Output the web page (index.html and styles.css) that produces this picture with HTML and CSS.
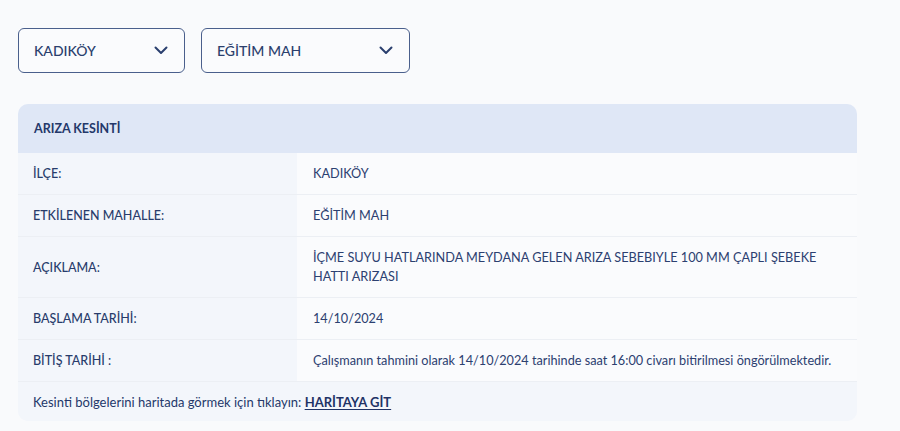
FILE: index.html
```html
<!DOCTYPE html>
<html lang="tr">
<head>
<meta charset="utf-8">
<link rel="stylesheet" href="styles.css">
</head>
<body>
<div class="page">
  <div class="filters">
    <div class="select select-district">
      <span>KADIKÖY</span>
      <svg class="chev" width="14" height="9" viewBox="0 0 14 9"><path d="M1.5 1.5 L7 7 L12.5 1.5" fill="none" stroke="#2a3f6e" stroke-width="2" stroke-linecap="round" stroke-linejoin="round"/></svg>
    </div>
    <div class="select select-hood">
      <span>EĞİTİM MAH</span>
      <svg class="chev" width="14" height="9" viewBox="0 0 14 9"><path d="M1.5 1.5 L7 7 L12.5 1.5" fill="none" stroke="#2a3f6e" stroke-width="2" stroke-linecap="round" stroke-linejoin="round"/></svg>
    </div>
  </div>

  <div class="card">
    <div class="card-head">ARIZA KESİNTİ</div>
    <div class="row">
      <div class="label">İLÇE:</div>
      <div class="value">KADIKÖY</div>
    </div>
    <div class="row">
      <div class="label">ETKİLENEN MAHALLE:</div>
      <div class="value">EĞİTİM MAH</div>
    </div>
    <div class="row tall">
      <div class="label">AÇIKLAMA:</div>
      <div class="value">İÇME SUYU HATLARINDA MEYDANA GELEN ARIZA SEBEBIYLE 100 MM ÇAPLI ŞEBEKE HATTI ARIZASI</div>
    </div>
    <div class="row">
      <div class="label">BAŞLAMA TARİHİ:</div>
      <div class="value">14/10/2024</div>
    </div>
    <div class="row">
      <div class="label">BİTİŞ TARİHİ :</div>
      <div class="value">Çalışmanın tahmini olarak 14/10/2024 tarihinde saat 16:00 civarı bitirilmesi öngörülmektedir.</div>
    </div>
    <div class="card-foot">Kesinti bölgelerini haritada görmek için tıklayın: <a href="#" class="map-link">HARİTAYA GİT</a></div>
  </div>
</div>
</body>
</html>
```

FILE: styles.css
```css
* { box-sizing: border-box; }
html, body { margin: 0; padding: 0; }
body {
  background: #f9fafc;
  font-family: "Lato", "Noto Sans", sans-serif;
  color: #283c6b;
  width: 900px;
  height: 431px;
  overflow: hidden;
}
.page {
  padding: 28px 43px 0 18px;
}
.filters {
  display: flex;
  gap: 16px;
}
.select {
  height: 45px;
  border: 1px solid #4a5f8c;
  border-radius: 6px;
  background: #fafbfd;
  display: flex;
  align-items: center;
  justify-content: space-between;
  padding: 0 16px 0 15px;
  font-size: 14px;
  font-weight: 500;
  color: #2b3f6d;
}
.select-district { width: 167px; }
.select-hood { width: 209px; }
.card {
  margin-top: 31px;
  width: 839px;
  border-radius: 10px;
  overflow: hidden;
  background: #f4f6fb;
}
.card-head {
  height: 49px;
  background: #dfe7f6;
  display: flex;
  align-items: center;
  padding-left: 16px;
  font-size: 12.5px;
  font-weight: 700;
  color: #24386a;
}
.row {
  display: grid;
  grid-template-columns: 279px 1fr;
  min-height: 42px;
  border-bottom: 1px solid #eceff4;
}
.row.tall { min-height: 61px; }
.label {
  background: #f3f6fb;
  display: flex;
  align-items: center;
  padding-left: 15px;
  font-size: 12.5px;
  font-weight: 500;
  color: #283c6b;
}
.value {
  background: #fafbfd;
  display: flex;
  align-items: center;
  padding: 0 16px;
  font-size: 12.7px;
  line-height: 19px;
  color: #2c4070;
}
.tall .value { padding-right: 40px; }
.card-foot {
  height: 39px;
  background: #f3f6fb;
  display: flex;
  align-items: center;
  padding-left: 15px;
  font-size: 13px;
  color: #24386a;
  white-space: pre;
}
.map-link {
  color: #1f3366;
  font-weight: 700;
  text-decoration: underline;
  text-underline-offset: 2px;
}
```
